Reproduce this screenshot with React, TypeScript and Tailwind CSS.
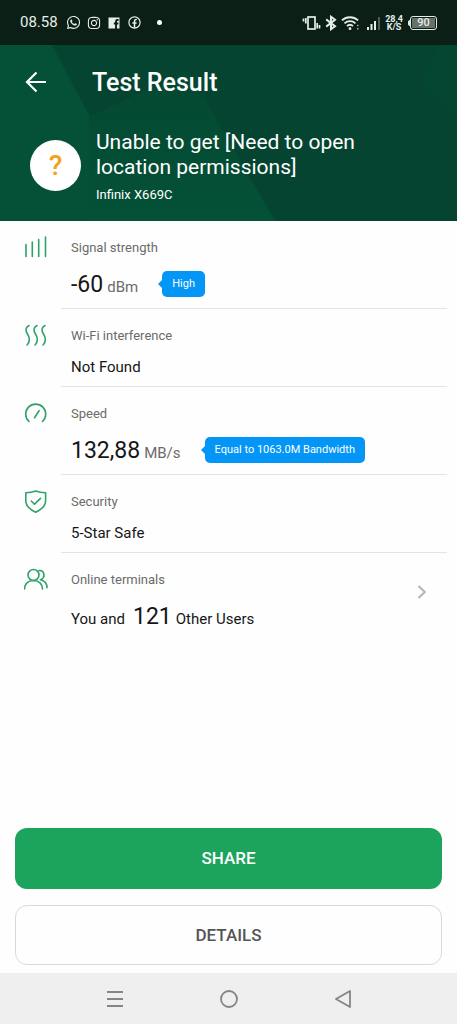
import type { ReactNode } from "react";
import { FaWhatsapp, FaInstagram } from "react-icons/fa";

function StatusBar() {
  return (
    <div className="flex h-[45px] items-center justify-between bg-[#0b1f17] px-5 text-[#e6eeea]">
      <div className="flex items-center">
        <span className="w-[46px] text-[15px]">08.58</span>
        <FaWhatsapp className="size-[15px]" aria-hidden="true" />
        <FaInstagram className="ml-[6px] size-[14px]" aria-hidden="true" />
        <svg className="ml-[7px] size-[12px]" viewBox="0 0 12 12" aria-hidden="true">
          <path fill="currentColor" d="M.5.5h11v11H9V7.400h1.400V5.600H9V4.600q0-.8.8-.8h.9V2.100H9.200Q7.100 2.100 7.100 4.300v1.300H5.800v1.800h1.300v4.100H.5z" />
        </svg>
        <svg className="ml-2 size-[13px]" viewBox="0 0 13 13" fill="none" stroke="currentColor" aria-hidden="true">
          <circle cx="6.5" cy="6.5" r="5.6" strokeWidth="1.2" />
          <path d="M6.500 12V5.200q0-1.800 2.300-1.600M4.400 7h4.200" strokeWidth="1.500" />
        </svg>
        <span className="ml-4 size-[5px] rounded-full bg-white" />
      </div>
      <div className="flex items-center">
        <svg className="h-4 w-[19px]" viewBox="0 0 19 16" fill="none" stroke="currentColor" strokeWidth="1.7" aria-hidden="true">
          <rect x="6" y="2" width="7" height="12" />
          <path d="M1.500 3.500v3M3.800 3v5.500M15.200 8v5.500M17.500 10v3.500" />
        </svg>
        <svg className="ml-1 h-4 w-3" viewBox="0 0 12 16" fill="none" stroke="currentColor" strokeWidth="2" aria-hidden="true">
          <path d="M1.200 4.400 10 11.200 6 14.200V1.800l4 3-8.800 6.800" />
        </svg>
        <svg className="ml-1 h-4 w-[19px]" viewBox="0 0 19 16" fill="none" stroke="currentColor" strokeWidth="1.8" aria-hidden="true">
          <path d="M.9 5.400a12 12 0 0 1 16.200 0M3.500 8.300a8.200 8.200 0 0 1 11 0M6 11a4.600 4.600 0 0 1 6 0" />
          <circle cx="9" cy="13.700" r="1.400" fill="currentColor" stroke="none" />
          <path d="M16.800 9.700v1.600M16.800 12.900v1.600" strokeWidth="1.300" opacity=".8" />
        </svg>
        <svg className="ml-[6px] h-4 w-[15px]" viewBox="0 0 15 16" fill="currentColor" aria-hidden="true">
          <rect x="1" y="12" width="2" height="3" />
          <rect x="4.500" y="9" width="2" height="6" />
          <rect x="8" y="6" width="2" height="9" />
          <rect x="12" y="2" width="2" height="13" opacity=".3" />
        </svg>
        <div className="ml-1 w-[18px] text-center text-[9px] leading-[8px] font-bold">
          <div>28,4</div>
          <div>K/S</div>
        </div>
        <div className="ml-[5px] flex items-center">
          <span className="h-[6px] w-[2px] rounded-l bg-current" />
          <div className="flex h-[14px] w-[27px] items-center rounded-[3px] border border-current p-px">
            <div className="flex h-full w-full items-center justify-center bg-[#65716b] text-[11px] leading-none font-medium">90</div>
          </div>
        </div>
      </div>
    </div>
  );
}

function Header() {
  return (
    <header className="relative overflow-hidden bg-[#044431] pb-[15px] text-white">
      <svg className="absolute inset-0 h-full w-full" viewBox="0 0 457 176" preserveAspectRatio="none" aria-hidden="true">
        <defs>
          <linearGradient id="facet" x1="0" y1="0" x2="0" y2="1">
            <stop offset="0" stopColor="#044832" />
            <stop offset="1" stopColor="#045137" />
          </linearGradient>
        </defs>
        <path d="M0 0h52l38 72v104H0z" fill="#045137" />
        <path d="m89 72 99-47 87 151H89z" fill="url(#facet)" />
        <path d="M457 0v75l-36-36L440 0z" fill="#044a34" opacity=".6" />
      </svg>
      <div className="relative flex h-[75px] items-center pl-6">
        <button type="button" aria-label="Back" className="flex size-6 items-center justify-center">
          <svg className="size-6" viewBox="0 0 24 24" fill="none" stroke="currentColor" strokeWidth="2.2" aria-hidden="true">
            <path d="M22 11H3M12.500 1.500 3 11l9.500 9.500" />
          </svg>
        </button>
        <h1 className="ml-11 text-[25px] font-medium">Test Result</h1>
      </div>
      <div className="relative mt-[10px] flex items-start pr-8 pl-[30px]">
        <div className="mt-[10px] flex size-[51px] shrink-0 items-center justify-center rounded-full bg-white text-[28px] leading-none font-medium text-[#f5a11c]">?</div>
        <div className="ml-[15px]">
          <p className="text-[21px] leading-[25px]">
            Unable to get [Need to open
            <br />
            location permissions]
          </p>
          <p className="mt-1 text-[13px] leading-[22px]">Infinix X669C</p>
        </div>
      </div>
    </header>
  );
}

function Tip({ children }: { children: ReactNode }) {
  return (
    <span className="ml-5 flex items-center">
      <span className="h-0 w-0 border-y-4 border-r-4 border-y-transparent border-r-[#0496f7]" />
      <span className="rounded-[5px] bg-[#0496f7] px-[10px] text-[11px] leading-[26px] text-white">{children}</span>
    </span>
  );
}

function Row({ icon, label, children, last = false }: { icon: ReactNode; label: string; children: ReactNode; last?: boolean }) {
  return (
    <li className="flex pr-[10px] pl-6">
      <svg className="mt-[15px] size-6 shrink-0" viewBox="0 0 24 24" fill="none" stroke="#2fa269" strokeWidth="1.6" strokeLinecap="round" strokeLinejoin="round" aria-hidden="true">
        {icon}
      </svg>
      <div className={`ml-[13px] flex flex-1 items-start justify-between border-b pr-5 pl-[10px] ${last ? "border-transparent" : "border-[#e4e4e4]"}`}>
        <div className="pt-[17px] pb-[7px]">
          <h2 className="text-[13px] leading-5 text-[#6b6b6b]">{label}</h2>
          <div className="mt-[9px] flex items-center text-[#161616]">{children}</div>
        </div>
        {last && (
          <button type="button" aria-label="Show online terminals" className="mt-[31px]">
            <svg className="h-4 w-[10px]" viewBox="0 0 10 16" fill="none" stroke="#b4b4b4" strokeWidth="2" aria-hidden="true">
              <path d="m1.500 2 6.300 6-6.300 6" />
            </svg>
          </button>
        )}
      </div>
    </li>
  );
}

function Reading({ value, unit }: { value: string; unit: string }) {
  return (
    <span className="flex h-[34px] items-baseline gap-1 leading-9">
      <span className="text-[23px]">{value}</span>
      <span className="text-[15px] leading-none text-[#6b6b6b]">{unit}</span>
    </span>
  );
}

export default function App() {
  return (
    <div className="flex min-h-screen flex-col bg-[#fefefe] font-['Roboto',sans-serif]">
      <StatusBar />
      <Header />
      <main className="flex flex-1 flex-col">
        <ul className="flex-1">
          <Row label="Signal strength" icon={<path d="M2 8.500V20.500M8.300 6v14.500M14.700 3.500v17M21.500 1v19.500" />}>
            <Reading value="-60" unit="dBm" />
            <Tip>High</Tip>
          </Row>
          <Row label="Wi-Fi interference" icon={<path d="M5 1.500C1 3.500 1.500 7 3.500 10s3 8-.5 11M13 1.500c-4 2-3.500 5.500-1.500 8.500s3 8-.5 11M21 1.500c-4 2-3.500 5.500-1.500 8.500s3 8-.5 11" />}>
            <span className="text-[15px] leading-6">Not Found</span>
          </Row>
          <Row label="Speed" icon={<path d="M5 19.500a10 10 0 1 1 13.400 0M10.500 15.700l4.600-7" />}>
            <Reading value="132,88" unit="MB/s" />
            <Tip>Equal to 1063.0M Bandwidth</Tip>
          </Row>
          <Row label="Security" icon={<path d="M11.700 1C8 2.500 5 2.700 1.800 2.800V11c0 5.500 4.200 8.500 9.900 11.200C17.400 19.500 21.600 16.500 21.600 11V2.800C18.400 2.700 15.400 2.500 11.700 1zM7.300 11l3.200 3.200 6-5.800" />}>
            <span className="text-[15px] leading-6">5-Star Safe</span>
          </Row>
          <Row
            last
            label="Online terminals"
            icon={
              <>
                <circle cx="9.500" cy="7" r="5.500" />
                <path d="M.5 21c0-5 3.500-8.500 9-8.500s9 3.500 9 8.500M15 2.600c5.500-.6 7 7 1.500 9.200 4.500 1 6.500 4 6.500 8" />
              </>
            }
          >
            <span className="flex h-[34px] items-baseline text-[15px] leading-9">
              <span>You and</span>
              <span className="mr-1 ml-2 text-[23px]">121</span>
              <span>Other Users</span>
            </span>
          </Row>
        </ul>
        <div className="flex flex-col gap-4 px-[15px] pb-2">
          <button type="button" className="h-[61px] rounded-xl bg-[#1ca45c] pt-px text-[17px] font-medium text-white">SHARE</button>
          <button type="button" className="h-[60px] rounded-xl border border-[#d9d9d9] pt-px text-[17px] font-medium text-[#555]">DETAILS</button>
        </div>
      </main>
      <nav className="flex h-[51px] items-center justify-center gap-[96px] bg-[#efefef] text-[#858585]">
        <button type="button" aria-label="Recent apps">
          <svg className="size-[18px]" viewBox="0 0 18 18" stroke="currentColor" strokeWidth="1.8" aria-hidden="true">
            <path d="M1 2h16M1 9h16M1 16h16" />
          </svg>
        </button>
        <button type="button" aria-label="Home">
          <svg className="size-[18px]" viewBox="0 0 18 18" fill="none" stroke="currentColor" strokeWidth="1.8" aria-hidden="true">
            <circle cx="9" cy="9" r="8" />
          </svg>
        </button>
        <button type="button" aria-label="Back to previous screen">
          <svg className="size-[18px]" viewBox="0 0 18 18" fill="none" stroke="currentColor" strokeWidth="1.8" strokeLinejoin="round" aria-hidden="true">
            <path d="M16 1v16L2 9z" />
          </svg>
        </button>
      </nav>
    </div>
  );
}
